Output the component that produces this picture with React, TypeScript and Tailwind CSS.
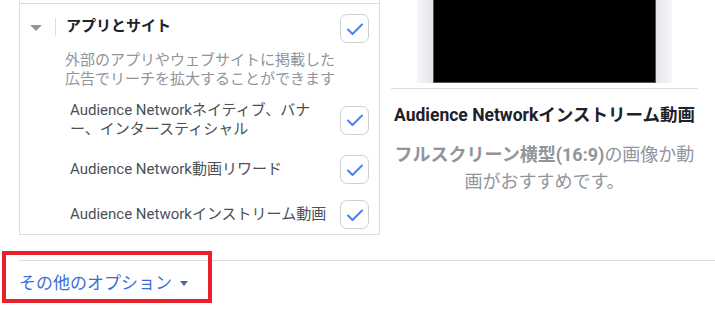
import { ReactNode } from 'react';

const font = { fontFamily: 'Roboto, "Noto Sans CJK JP", sans-serif' };

function Check() {
    return (
        <div className="w-[29px] h-[29px] shrink-0 rounded-[7px] border border-[#ccd0d5] bg-white flex items-center justify-center">
            <svg width="18" height="14" viewBox="0 0 18 14" fill="none">
                <path d="M2 7.5 L6.5 12 L16 2.5" stroke="#4a80f0" strokeWidth="2" strokeLinecap="round" strokeLinejoin="round" />
            </svg>
        </div>
    );
}

function Placement({ children }: { children: ReactNode }) {
    return (
        <div className="flex items-center pl-[50px] pr-[10px] gap-[9px]">
            <div className="flex-1 text-[15px] leading-[19px] text-[#4b4f56]">{children}</div>
            <Check />
        </div>
    );
}

export default function App() {
    return (
        <div className="relative w-[715px] h-[322px] overflow-hidden bg-white" style={font}>
            <div className="flex pl-[19px] gap-[11px]">
                {/* Placements list */}
                <div className="w-[361px] border-x border-b border-[#dadde1]">
                    <div className="h-[3px]" />
                    <div className="border-t border-[#dadde1] pt-[10px] pb-[5px]">
                        <div className="flex items-center pl-[10px] pr-[10px]">
                            <svg width="12" height="6" viewBox="0 0 12 6" className="shrink-0 -mt-[2px]">
                                <path d="M0 0 H12 L6 6 Z" fill="#90949c" />
                            </svg>
                            <div className="w-px h-[18px] bg-[#dadde1] ml-[13px] mr-[10px] -mt-[3px]" />
                            <div className="flex-1 text-[15px] font-bold text-[#1d2129] -mt-[4px]">アプリとサイト</div>
                            <Check />
                        </div>
                        <p className="w-[274px] ml-[45px] mt-[8px] text-[15px] leading-[19px] text-[#90949c]">
                            外部のアプリやウェブサイトに掲載した広告でリーチを拡大することができます
                        </p>
                        <div className="flex flex-col gap-4 mt-[12px]">
                            <Placement>Audience Networkネイティブ、バナー、インタースティシャル</Placement>
                            <Placement>Audience Network動画リワード</Placement>
                            <Placement>Audience Networkインストリーム動画</Placement>
                        </div>
                    </div>
                </div>

                {/* Preview */}
                <div className="w-[307px]">
                    <div className="mx-auto w-[255px] h-[83px] flex bg-gradient-to-r from-[#f3f4f6] via-[#e9eaed] to-[#f3f4f6]">
                        <div className="w-[16px] bg-gradient-to-r from-[#f5f6f7] to-[#e4e6ea]" />
                        <div className="flex-1 bg-black border-x border-b border-[#555]" />
                        <div className="w-[16px] bg-gradient-to-r from-[#e4e6ea] to-[#f5f6f7]" />
                    </div>
                    <div className="mt-[5px] border-t border-[#dadde1] pt-[14px] text-center">
                        <div className="text-[17.5px] font-bold text-[#1d2129] leading-[24px]">Audience Networkインストリーム動画</div>
                        <p className="mt-[14px] text-[18px] leading-[27px] text-[#90949c]">
                            <span className="font-bold">フルスクリーン横型(16:9)</span>の画像か動画がおすすめです。
                        </p>
                    </div>
                </div>
            </div>

            {/* More options */}
            <div className="ml-[19px] mt-[25px] border-t border-[#dadde1] pt-[10px]">
                <button className="flex items-center gap-[8px] text-[17px] text-[#3b6fd6]">
                    その他のオプション
                    <svg width="8" height="5" viewBox="0 0 8 5">
                        <path d="M0 0 H8 L4 5 Z" fill="#4b67a1" />
                    </svg>
                </button>
            </div>

            {/* Annotation highlight */}
            <div className="absolute left-[2px] top-[251px] w-[210px] h-[52px] border-4 border-[#e8212a]" />
        </div>
    );
}
